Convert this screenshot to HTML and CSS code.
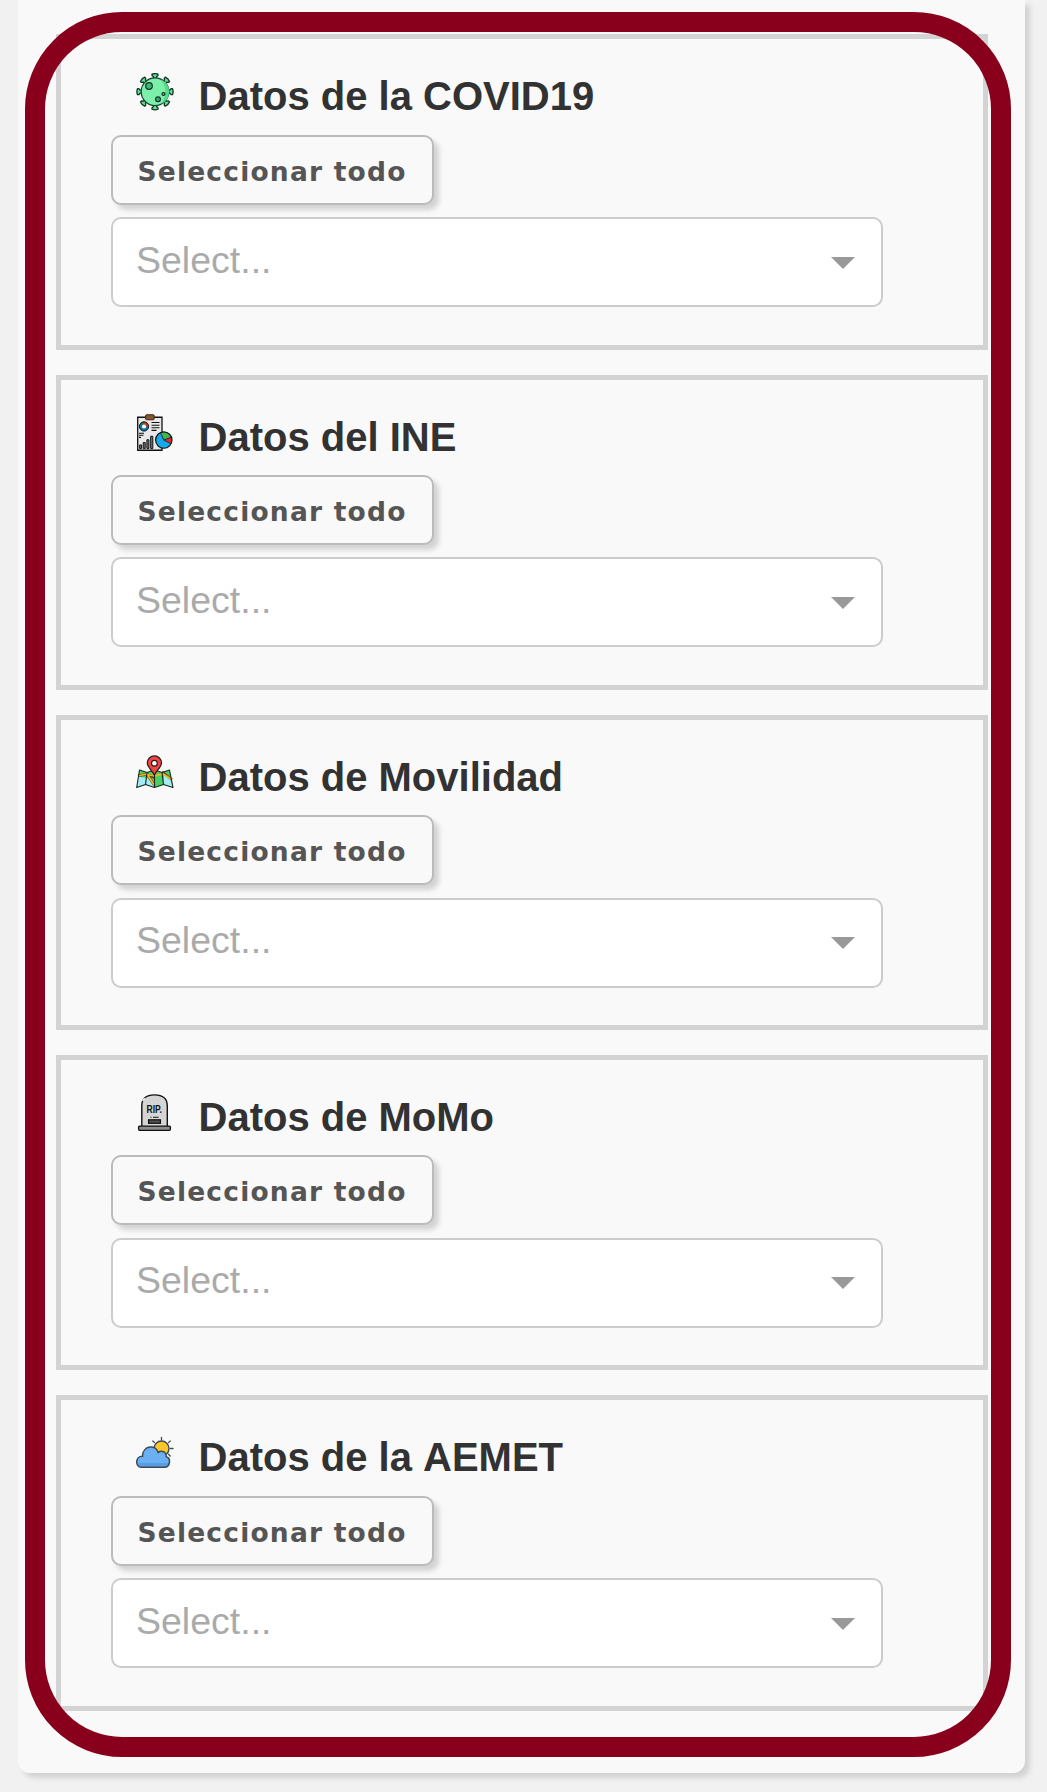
FILE: index.html
```html
<!DOCTYPE html>
<html lang="es">
<head>
<meta charset="utf-8">
<title>Selección de datos</title>
<link rel="stylesheet" href="styles.css">
</head>
<body>
<main class="panel">
  <section class="group">
    <h2 class="title">
      <svg class="icon" viewBox="11 13 38 38" aria-hidden="true">
        <g stroke="#123326" fill="#5fe092" stroke-width="1.300" stroke-linejoin="round">
          <path id="spike" d="M28.500 19.200V16.800L27 15.600V14.200Q30 13 33 14.200V15.600L31.500 16.800V19.200"/>
          <use href="#spike" transform="rotate(45 30 31.700)"/>
          <use href="#spike" transform="rotate(90 30 31.700)"/>
          <use href="#spike" transform="rotate(135 30 31.700)"/>
          <use href="#spike" transform="rotate(180 30 31.700)"/>
          <use href="#spike" transform="rotate(225 30 31.700)"/>
          <use href="#spike" transform="rotate(270 30 31.700)"/>
          <use href="#spike" transform="rotate(315 30 31.700)"/>
        </g>
        <circle cx="30" cy="31.700" r="13.800" fill="#7cefaa" stroke="#194331" stroke-width="1.200"/>
        <path d="M36 19.500a13.300 13.300 0 0 1 0 24.500q9-12 0-24.500" fill="#54da89"/>
        <g fill="#3fb477" stroke="#123326" stroke-width="1.200">
          <circle cx="24" cy="26" r="3.300"/><circle cx="33" cy="39.300" r="2.400"/><circle cx="38.500" cy="34" r="1.500"/>
        </g>
      </svg>
      Datos de la COVID19
    </h2>
    <button class="select-all" type="button">Seleccionar todo</button>
    <div class="dropdown"><span>Select...</span><i class="arrow"></i></div>
  </section>

  <section class="group">
    <h2 class="title">
      <svg class="icon" viewBox="11 11.250 38 38" aria-hidden="true">
        <path d="M12.700 14.500H37V47.500H12.700Z" fill="#e9e9ec" stroke="#111" stroke-width="1.300"/>
        <rect x="20.600" y="12" width="8.600" height="5" rx="1" fill="#8a562d" stroke="#3c2614" stroke-width="1"/>
        <circle cx="19" cy="23.700" r="3.400" fill="#fff" stroke="#0879af" stroke-width="2.600"/>
        <path d="M19 20.300A3.400 3.400 0 0 1 22.400 23.700" fill="none" stroke="#c93e25" stroke-width="2.600"/>
        <path d="M16 22A3.400 3.400 0 0 1 19 20.300" fill="none" stroke="#28783b" stroke-width="2.600"/>
        <circle cx="19" cy="23.700" r="4.600" fill="none" stroke="#111" stroke-width="1"/>
        <path d="M26.500 19.800H34.500M26.500 22.500H34.500M26.500 25H34.500M26.500 27.600H31.500M14 30.500H19M14 32.500H18.500M14 34.600H16" stroke="#111" stroke-width="1.100"/>
        <path d="M14.600 42.200h2v3.500h-2zM18.200 39.800h2v5.900h-2zM21.900 37h2v8.700h-2zM25.700 33.500h2.100v12.200h-2.100z" fill="#77777c" stroke="#111"/>
        <circle cx="38.800" cy="37.300" r="8.200" fill="#16a8e8"/>
        <path d="M38.800 37.300L35.500 30A8.200 8.200 0 0 1 46.200 34.500Z" fill="#42b553"/>
        <path d="M38.800 37.300L46.200 34.500Q47.500 38 46.500 40.500Z" fill="#ec2430"/>
        <path d="M35.500 30L38.800 37.300L46.200 34.500M38.800 37.300L46 41" fill="none" stroke="#142427" stroke-width=".9"/>
        <circle cx="38.800" cy="37.300" r="8.200" fill="none" stroke="#111" stroke-width="1.200"/>
      </svg>
      Datos del INE
    </h2>
    <button class="select-all" type="button">Seleccionar todo</button>
    <div class="dropdown"><span>Select...</span><i class="arrow"></i></div>
  </section>

  <section class="group">
    <h2 class="title">
      <svg class="icon" viewBox="11 11.500 38 38" aria-hidden="true">
        <path d="M14.500 27.500L22 30L29.500 27.500L37 30L44.500 27.500L48 45L38.500 42L29.500 45L20.500 42L11.700 45Z" fill="#4ccc65"/>
        <path d="M13.300 34L21 35.500L20.500 42L11.700 45ZM22 35L29.500 42V45L20.500 42ZM39 32L44.500 35L48 45L38.500 42Z" fill="#a5ebf5"/>
        <path d="M13 33.500L22 31.500L29.500 43M22 32L29.500 35M37 29.500L47 37" fill="none" stroke="#5e4517" stroke-width="2.600"/>
        <path d="M13 33.500L22 31.500L29.500 43M22 32L29.500 33.500L38 31.500L47 37" fill="none" stroke="#f5b522" stroke-width="1.700"/>
        <path d="M14.500 27.500L22 30L29.500 27.500L37 30L44.500 27.500L48 45L38.500 42L29.500 45L20.500 42L11.700 45ZM22 30L20.500 42M29.500 28V45M37 30L38.500 42" fill="none" stroke="#172a1d" stroke-width="1.100" stroke-linejoin="round"/>
        <path d="M29.300 32.500C27 27.500 22.300 24.500 22.300 20.500A7.100 7.100 0 0 1 36.500 20.500C36.500 24.500 31.800 27.500 29.300 32.500Z" fill="#f04445" stroke="#291719" stroke-width="1.200"/>
        <circle cx="29.400" cy="20.800" r="2.900" fill="#fff" stroke="#291719" stroke-width="1.200"/>
      </svg>
      Datos de Movilidad
    </h2>
    <button class="select-all" type="button">Seleccionar todo</button>
    <div class="dropdown"><span>Select...</span><i class="arrow"></i></div>
  </section>

  <section class="group">
    <h2 class="title">
      <svg class="icon" viewBox="11 11.750 38 38" aria-hidden="true">
        <path d="M16.800 44V23.500Q16.800 12.600 29.500 12.600T42.300 23.500V44" fill="#d5d5d5" stroke="#111" stroke-width="1.400"/>
        <path d="M17.500 18.500l2.200-2.500" stroke="#f9f9f9" stroke-width="1.500"/>
        <rect x="13.600" y="43.800" width="31.800" height="4.300" rx="1" fill="#8d8d8d" stroke="#111" stroke-width="1.300"/>
        <text x="21.500" y="30.500" class="rip" textLength="15.500" lengthAdjust="spacingAndGlyphs">RIP.</text>
        <path d="M25.500 35h1M28 35h5.500" stroke="#111" stroke-width="1"/>
        <rect x="23.600" y="37.600" width="11.800" height="3.400" fill="#555" stroke="#111" stroke-width="1.300"/>
      </svg>
      Datos de MoMo
    </h2>
    <button class="select-all" type="button">Seleccionar todo</button>
    <div class="dropdown"><span>Select...</span><i class="arrow"></i></div>
  </section>

  <section class="group">
    <h2 class="title">
      <svg class="icon" viewBox="11 9 38 38" aria-hidden="true">
        <path d="M36.500 12.300V15M27.800 16l1.700 1.600M45.200 16l-1.700 1.600M45.500 23.500H48M43.500 29.300l1.700 1.700" stroke="#3a4a55" stroke-width="1.300" stroke-linecap="round"/>
        <circle cx="36.500" cy="23.500" r="7.500" fill="#ffc629" stroke="#3a4a55" stroke-width="1.400"/>
        <path d="M16.500 42.300C9.500 41.500 10.500 31 17.500 31.300C17.500 20.500 31 18.800 33.200 27.500C37.500 24.500 41.500 27.500 41.300 31.700C46 33 45.500 42 39.500 42.300Z" fill="#6bb0f2"/>
        <path d="M12.700 38H43.500Q42.500 41.600 39.500 41.700H16.500Q13.500 41.200 12.700 38" fill="#5b9de2"/>
        <path d="M16.500 42.300C9.500 41.500 10.500 31 17.500 31.300C17.500 20.500 31 18.800 33.200 27.500C37.500 24.500 41.500 27.500 41.300 31.700C46 33 45.500 42 39.500 42.300Z" fill="none" stroke="#3a4a55" stroke-width="1.500"/>
      </svg>
      Datos de la AEMET
    </h2>
    <button class="select-all" type="button">Seleccionar todo</button>
    <div class="dropdown"><span>Select...</span><i class="arrow"></i></div>
  </section>
  <div class="highlight"></div>
</main>
</body>
</html>
```
FILE: styles.css
```css
* { box-sizing: border-box; }
body {
  margin: 0;
  height: 1792px;
  overflow: hidden;
  background: #f1f1f1;
  font-family: "Liberation Sans", Arial, sans-serif;
}
.panel {
  position: relative;
  width: 1007px;
  height: 1773px;
  margin-left: 18px;
  padding: 34.3px 37px 0 38px;
  display: flex;
  flex-direction: column;
  gap: 25px;
  background: #f9f9f9;
  border-radius: 0 0 12px 12px;
  box-shadow: 5px 5px 5px lightgrey;
}
.group {
  flex: none;
  height: 315.25px;
  border: 5px solid lightgrey;
  padding: 34px 50px 0;
}
.title {
  display: flex;
  gap: 24.5px;
  margin: 0 0 11.3px 25px;
  height: 50px;
  font-size: 40px;
  line-height: 46px;
  font-weight: bold;
  font-kerning: none;
  color: #323232;
  white-space: nowrap;
}
.icon { flex: none; width: 38px; height: 38px; }
.rip { font: bold 10.5px "Liberation Sans", Arial, sans-serif; fill: #111; }
.select-all {
  display: block;
  width: 323px;
  height: 70px;
  padding: 3px 1px 0 0;
  border: 2px solid #bbb;
  border-radius: 10px;
  background: #f9f9f9;
  box-shadow: 5px 5px 5px lightgrey;
  color: #555;
  font: bold 26.5px/63px "DejaVu Sans", Verdana, sans-serif;
  letter-spacing: 1.2px;
  white-space: nowrap;
}
.dropdown {
  display: flex;
  justify-content: space-between;
  align-items: center;
  width: 772px;
  height: 90px;
  margin-top: 12.6px;
  padding: 0 26px 0 23px;
  border: 2px solid #ccc;
  border-radius: 10px;
  background: #fff;
  color: #aaa;
  font-size: 37.5px;
  line-height: 86px;
}
.dropdown span { margin-top: -5px; }
.arrow {
  margin-top: 1px;
  border: solid transparent;
  border-width: 12px 12px 0;
  border-top-color: #999;
}
.highlight {
  position: absolute;
  left: 7px;
  top: 12px;
  width: 986px;
  height: 1745px;
  border: 20px solid #88001b;
  border-radius: 97px;
}
```
